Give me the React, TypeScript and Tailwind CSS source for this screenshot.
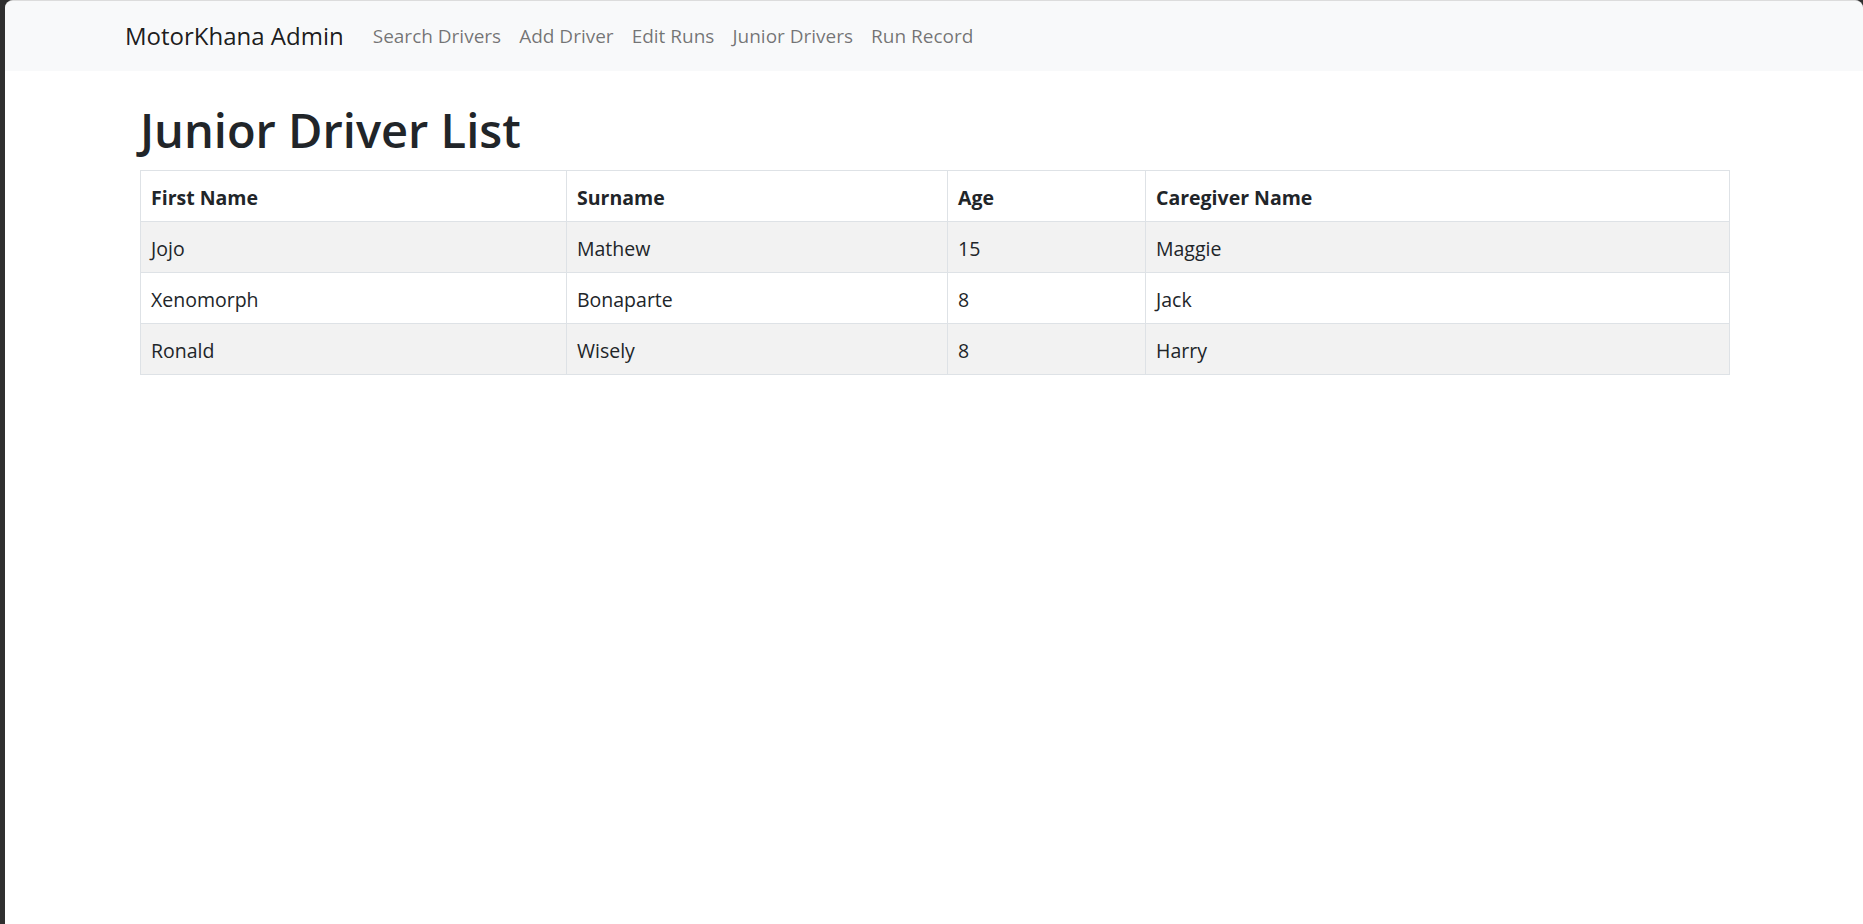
const LINKS = ['Search Drivers', 'Add Driver', 'Edit Runs', 'Junior Drivers', 'Run Record'];

type Junior = {
  first: string;
  surname: string;
  age: number;
  caregiver: string;
};

const JUNIORS: Junior[] = [
  { first: 'Jojo', surname: 'Mathew', age: 15, caregiver: 'Maggie' },
  { first: 'Xenomorph', surname: 'Bonaparte', age: 8, caregiver: 'Jack' },
  { first: 'Ronald', surname: 'Wisely', age: 8, caregiver: 'Harry' },
];

function Navbar() {
  return (
    <nav className="flex h-[70px] items-center bg-[#f8f9fa] pl-[120px]">
      <a className="mr-[20px] text-[24px] leading-[38px] text-black/90">MotorKhana Admin</a>
      <ul className="flex items-center">
        {LINKS.map((link) => (
          <li key={link}>
            <a className="block px-[9px] text-[19px] leading-[30px] text-black/55">{link}</a>
          </li>
        ))}
      </ul>
    </nav>
  );
}

function JuniorTable() {
  const cell = 'border border-[#dee2e6] px-[10px] pt-[12px] pb-[8px] text-left align-top';
  return (
    <table className="w-[1589px] table-fixed border-collapse text-[19.5px] leading-[30px] text-[#212529]">
      <colgroup>
        <col className="w-[426px]" />
        <col className="w-[381px]" />
        <col className="w-[198px]" />
        <col className="w-[584px]" />
      </colgroup>
      <thead>
        <tr className="bg-white">
          <th className={`${cell} font-bold`}>First Name</th>
          <th className={`${cell} font-bold`}>Surname</th>
          <th className={`${cell} font-bold`}>Age</th>
          <th className={`${cell} font-bold`}>Caregiver Name</th>
        </tr>
      </thead>
      <tbody>
        {JUNIORS.map((j, i) => (
          <tr key={j.first} className={i % 2 === 0 ? 'bg-[#f2f2f2]' : 'bg-white'}>
            <td className={cell}>{j.first}</td>
            <td className={cell}>{j.surname}</td>
            <td className={cell}>{j.age}</td>
            <td className={cell}>{j.caregiver}</td>
          </tr>
        ))}
      </tbody>
    </table>
  );
}

export default function App() {
  return (
    <div
      className="flex h-[924px] w-full bg-[#2f2f2f]"
      style={{ fontFamily: '"Open Sans", "Noto Sans", sans-serif' }}
    >
      <div className="ml-[5px] flex-1 overflow-hidden rounded-t-[8px] border-t border-[#dcdcdc] bg-white">
        <Navbar />
        <main className="pl-[135px] pt-[29px]">
          <h1 className="mb-[10px] text-[47px] font-semibold leading-[60px] text-[#212529]">Junior Driver List</h1>
          <JuniorTable />
        </main>
      </div>
    </div>
  );
}
